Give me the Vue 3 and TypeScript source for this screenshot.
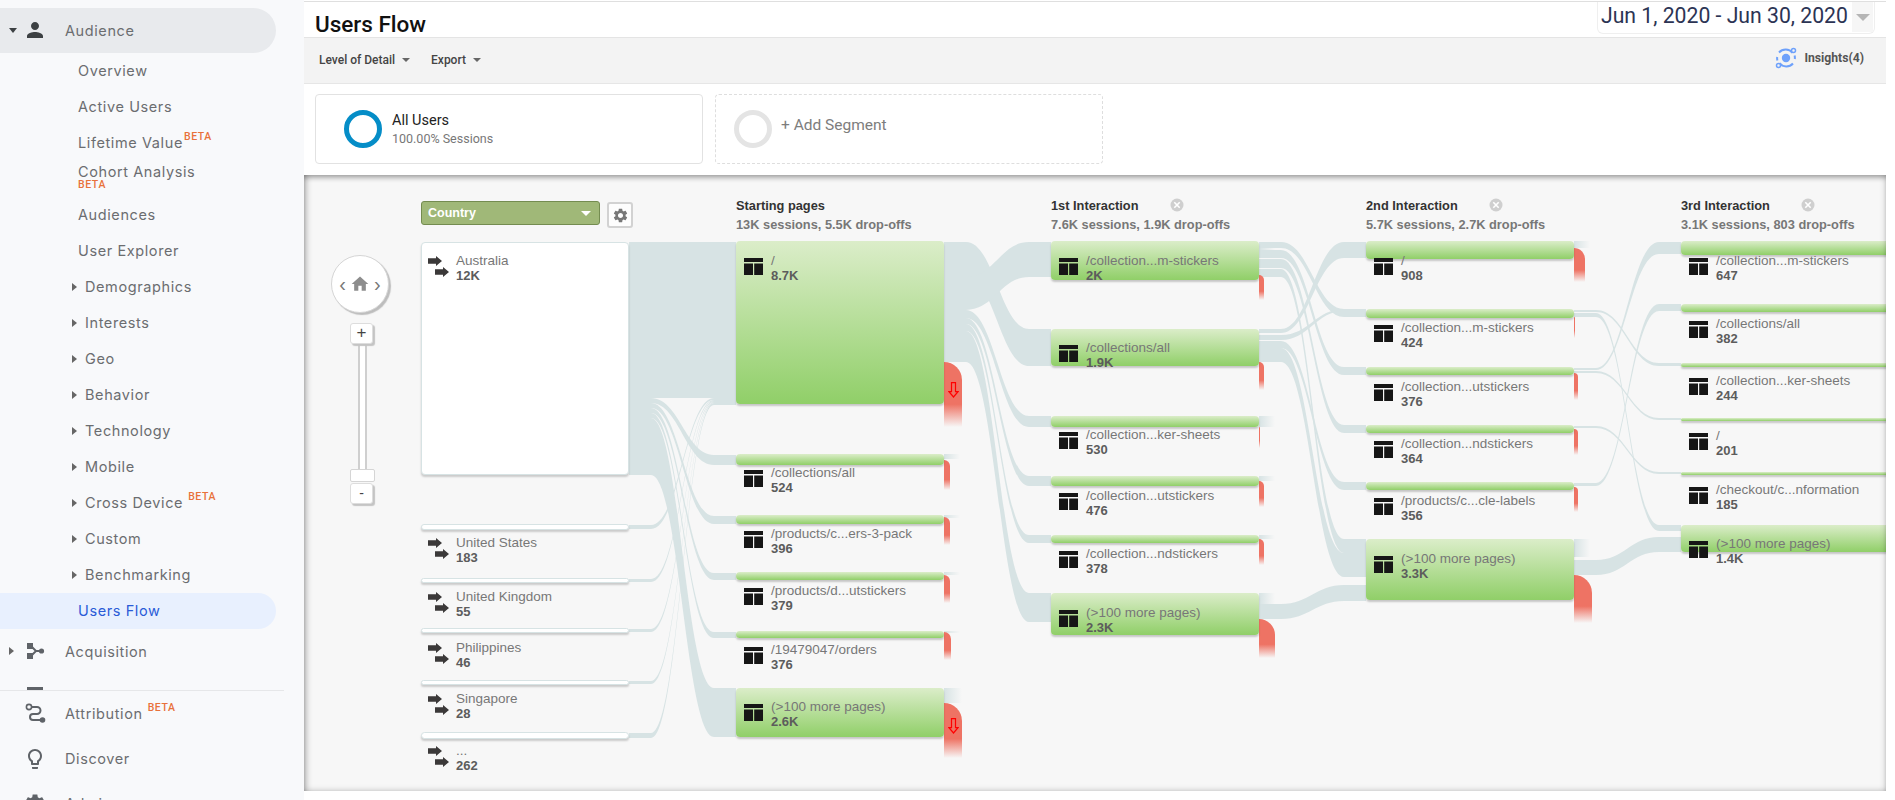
<script setup lang="ts">
type NavRow = { label: string; kind: 'top' | 'sub' | 'group'; beta?: boolean; active?: boolean; open?: boolean; icon?: string; stack?: boolean };

const navRows: NavRow[] = [
  { label: 'Audience', kind: 'top', open: true, icon: 'person' },
  { label: 'Overview', kind: 'sub' },
  { label: 'Active Users', kind: 'sub' },
  { label: 'Lifetime Value', kind: 'sub', beta: true },
  { label: 'Cohort Analysis', kind: 'sub', beta: true, stack: true },
  { label: 'Audiences', kind: 'sub' },
  { label: 'User Explorer', kind: 'sub' },
  { label: 'Demographics', kind: 'group' },
  { label: 'Interests', kind: 'group' },
  { label: 'Geo', kind: 'group' },
  { label: 'Behavior', kind: 'group' },
  { label: 'Technology', kind: 'group' },
  { label: 'Mobile', kind: 'group' },
  { label: 'Cross Device', kind: 'group', beta: true },
  { label: 'Custom', kind: 'group' },
  { label: 'Benchmarking', kind: 'group' },
  { label: 'Users Flow', kind: 'sub', active: true },
  { label: 'Acquisition', kind: 'top', icon: 'acq' },
  { label: '', kind: 'top', icon: 'beh' }
];
const bottomRows: NavRow[] = [
  { label: 'Attribution', kind: 'top', beta: true, icon: 'attr' },
  { label: 'Discover', kind: 'top', icon: 'bulb' },
  { label: 'Admin', kind: 'top', icon: 'gear' }
];

const OX = 304;
const OY = 175;
const px = (x: number, y: number) => ({ left: `${x - OX}px`, top: `${y - OY}px` });

const countries = [
  { name: 'Australia', val: '12K', y: 260 },
  { name: 'United States', val: '183', y: 542 },
  { name: 'United Kingdom', val: '55', y: 596 },
  { name: 'Philippines', val: '46', y: 647 },
  { name: 'Singapore', val: '28', y: 698 },
  { name: '...', val: '262', y: 750 }
];
const countryBars = [
  [242, 475], [524, 530], [578, 583], [628, 633], [680, 685], [732, 739]
];

const headers = [
  { x: 736, title: 'Starting pages', sub: '13K sessions, 5.5K drop-offs', close: 0 },
  { x: 1051, title: '1st Interaction', sub: '7.6K sessions, 1.9K drop-offs', close: 1177 },
  { x: 1366, title: '2nd Interaction', sub: '5.7K sessions, 2.7K drop-offs', close: 1496 },
  { x: 1681, title: '3rd Interaction', sub: '3.1K sessions, 803 drop-offs', close: 1808 }
];

const nodes = [
  { x: 736, t: 241, b: 404, name: '/', val: '8.7K', y: 260 },
  { x: 736, t: 454, b: 465, name: '/collections/all', val: '524', y: 472 },
  { x: 736, t: 515, b: 524, name: '/products/c...ers-3-pack', val: '396', y: 533 },
  { x: 736, t: 572, b: 580, name: '/products/d...utstickers', val: '379', y: 590 },
  { x: 736, t: 631, b: 638, name: '/19479047/orders', val: '376', y: 649 },
  { x: 736, t: 688, b: 737, name: '(>100 more pages)', val: '2.6K', y: 706 },
  { x: 1051, t: 241, b: 280, name: '/collection...m-stickers', val: '2K', y: 260 },
  { x: 1051, t: 329, b: 366, name: '/collections/all', val: '1.9K', y: 347 },
  { x: 1051, t: 416, b: 427, name: '/collection...ker-sheets', val: '530', y: 434 },
  { x: 1051, t: 476, b: 486, name: '/collection...utstickers', val: '476', y: 495 },
  { x: 1051, t: 535, b: 543, name: '/collection...ndstickers', val: '378', y: 553 },
  { x: 1051, t: 593, b: 635, name: '(>100 more pages)', val: '2.3K', y: 612 },
  { x: 1366, t: 241, b: 259, name: '/', val: '908', y: 260 },
  { x: 1366, t: 309, b: 318, name: '/collection...m-stickers', val: '424', y: 327 },
  { x: 1366, t: 367, b: 375, name: '/collection...utstickers', val: '376', y: 386 },
  { x: 1366, t: 425, b: 433, name: '/collection...ndstickers', val: '364', y: 443 },
  { x: 1366, t: 482, b: 490, name: '/products/c...cle-labels', val: '356', y: 500 },
  { x: 1366, t: 539, b: 600, name: '(>100 more pages)', val: '3.3K', y: 558 },
  { x: 1681, t: 241, b: 255, name: '/collection...m-stickers', val: '647', y: 260 },
  { x: 1681, t: 304, b: 312, name: '/collections/all', val: '382', y: 323 },
  { x: 1681, t: 363, b: 367, name: '/collection...ker-sheets', val: '244', y: 380 },
  { x: 1681, t: 418, b: 421, name: '/', val: '201', y: 435 },
  { x: 1681, t: 472, b: 475, name: '/checkout/c...nformation', val: '185', y: 489 },
  { x: 1681, t: 525, b: 552, name: '(>100 more pages)', val: '1.4K', y: 543 }
];

const drops = [
  { x: 944, t: 362, b: 427, w: 18, arrow: 390 },
  { x: 944, t: 460, b: 490, w: 6 },
  { x: 944, t: 517, b: 545, w: 6 },
  { x: 944, t: 575, b: 603, w: 6 },
  { x: 944, t: 632, b: 660, w: 7 },
  { x: 944, t: 703, b: 758, w: 18, arrow: 726 },
  { x: 1259, t: 275, b: 300, w: 5 },
  { x: 1259, t: 362, b: 390, w: 5 },
  { x: 1259, t: 427, b: 448, w: 1 },
  { x: 1259, t: 481, b: 507, w: 5 },
  { x: 1259, t: 539, b: 565, w: 5 },
  { x: 1259, t: 619, b: 658, w: 16 },
  { x: 1574, t: 248, b: 282, w: 11 },
  { x: 1574, t: 317, b: 338, w: 1 },
  { x: 1574, t: 373, b: 400, w: 4 },
  { x: 1574, t: 429, b: 455, w: 4 },
  { x: 1574, t: 487, b: 512, w: 4 },
  { x: 1574, t: 575, b: 623, w: 18 }
];

const links: number[][] = [
  [629, 242, 398, 736, 242, 398],
  [629, 398, 403, 736, 455, 465],
  [629, 403, 408, 736, 516, 524],
  [629, 408, 413, 736, 573, 580],
  [629, 413, 418, 736, 632, 638],
  [629, 418, 475, 736, 688, 737],
  [629, 525, 529, 736, 398, 400],
  [629, 579, 582, 736, 400, 401],
  [629, 629, 632, 736, 401, 402],
  [629, 681, 684, 736, 402, 403],
  [629, 733, 738, 736, 403, 405],
  [944, 242, 277, 1051, 329, 366],
  [944, 277, 310, 1051, 242, 277],
  [944, 310, 318, 1051, 416, 427],
  [944, 318, 324, 1051, 476, 486],
  [944, 324, 331, 1051, 535, 543],
  [944, 331, 362, 1051, 593, 622],
  [1259, 242, 248, 1366, 309, 317],
  [1259, 250, 258, 1366, 367, 375],
  [1259, 259, 268, 1366, 425, 433],
  [1259, 269, 277, 1366, 539, 553],
  [1259, 329, 333, 1366, 242, 258],
  [1259, 335, 340, 1366, 309, 311],
  [1259, 341, 348, 1366, 482, 490],
  [1259, 348, 362, 1366, 553, 577],
  [1259, 604, 619, 1366, 585, 601],
  [1574, 310, 312, 1681, 363, 366],
  [1574, 313, 317, 1681, 525, 531],
  [1574, 368, 370, 1681, 242, 254],
  [1574, 371, 373, 1681, 418, 420],
  [1574, 426, 428, 1681, 472, 474],
  [1574, 483, 486, 1681, 304, 311],
  [1574, 560, 575, 1681, 537, 552]
];

const stub = (x0: number, x1: number) => Math.min(22, (x1 - x0) * 0.22);
const bandPath = (l: number[]) => {
  const [x0, a0, b0, x1, a1, b1] = l;
  const s = stub(x0, x1);
  const sx = x0 + s;
  const ex = x1 - s;
  const m = (ex - sx) * 0.45;
  return `M${x0} ${a0}H${sx}C${sx + m} ${a0} ${ex - m} ${a1} ${ex} ${a1}H${x1}V${b1}H${ex}C${ex - m} ${b1} ${sx + m} ${b0} ${sx} ${b0}H${x0}Z`;
};

const fades = [
  { x: 944, y: 454, h: 5, w: 16 },
  { x: 944, y: 515, h: 3, w: 16 },
  { x: 944, y: 572, h: 3, w: 16 },
  { x: 944, y: 631, h: 2, w: 16 },
  { x: 944, y: 688, h: 15, w: 18 },
  { x: 1259, y: 416, h: 11, w: 16 },
  { x: 1259, y: 476, h: 5, w: 16 },
  { x: 1259, y: 535, h: 4, w: 16 },
  { x: 1259, y: 593, h: 11, w: 16 },
  { x: 1574, y: 241, h: 7, w: 16 },
  { x: 1574, y: 539, h: 18, w: 16 },
  { x: 1259, y: 242, h: 8, w: 16 }
];
</script>

<template>
  <div class="app">
    <aside class="sidebar">
      <div class="nav-scroll">
        <div
          v-for="row in navRows"
          :key="row.label + row.kind"
          class="nav-row"
          :class="[row.kind, { active: row.active, open: row.open, stack: row.stack }]"
        >
          <span v-if="row.kind === 'top'" class="caret-slot">
            <i v-if="row.open" class="caret-down"></i>
            <i v-else class="caret-right"></i>
          </span>
          <i v-if="row.kind === 'group'" class="caret-right group-caret"></i>
          <svg v-if="row.icon" class="nav-icon" viewBox="0 0 24 24">
            <path v-if="row.icon === 'person'" fill="#3c4043" d="M12 12c2.21 0 4-1.79 4-4s-1.790-4-4-4-4 1.790-4 4 1.790 4 4 4zm0 2c-2.670 0-8 1.340-8 4v2h16v-2c0-2.660-5.330-4-8-4z" />
            <g v-else-if="row.icon === 'acq'" fill="#5f6368">
              <rect x="4" y="4" width="6" height="6" />
              <rect x="4" y="14" width="6" height="6" />
              <circle cx="18.5" cy="12" r="2.6" />
              <path d="M8 7l5 5-5 5M13 12h5" fill="none" stroke="#5f6368" stroke-width="2" />
            </g>
            <rect v-else-if="row.icon === 'beh'" x="4" y="3" width="16" height="18" fill="#5f6368" />
          </svg>
          <span class="nav-text">{{ row.label }}</span><span v-if="row.beta" class="beta">BETA</span>
        </div>
      </div>
      <div class="nav-bottom">
        <div v-for="row in bottomRows" :key="row.label" class="nav-row top">
          <span class="caret-slot"></span>
          <svg class="nav-icon" viewBox="0 0 24 24">
            <g v-if="row.icon === 'attr'">
              <path d="M6 5H14a3.500 3.500 0 0 1 0 7H10a3 3 0 0 0 0 6H19" fill="none" stroke="#5f6368" stroke-width="2" />
              <circle cx="6" cy="5" r="2.6" fill="#f8f9fb" stroke="#5f6368" stroke-width="1.6" />
              <circle cx="19.5" cy="18" r="2.8" fill="#5f6368" />
            </g>
            <path v-else-if="row.icon === 'bulb'" fill="#5f6368" d="M9 21c0 .55.45 1 1 1h4c.55 0 1-.45 1-1v-1H9v1zm3-19C8.140 2 5 5.140 5 9c0 2.380 1.190 4.470 3 5.740V17c0 .55.45 1 1 1h6c.55 0 1-.45 1-1v-2.260c1.810-1.270 3-3.360 3-5.740 0-3.860-3.140-7-7-7zm2.850 11.100l-.85.6V16h-4v-2.300l-.85-.6C7.800 12.160 7 10.630 7 9c0-2.760 2.240-5 5-5s5 2.240 5 5c0 1.630-.8 3.160-2.150 4.100z" />
            <path v-else fill="#5f6368" d="M19.14 12.94c.04-.3.06-.61.06-.94 0-.32-.02-.64-.07-.94l2.03-1.58c.18-.14.23-.41.12-.61l-1.92-3.32c-.12-.22-.37-.29-.59-.22l-2.39.96c-.5-.38-1.03-.7-1.62-.94l-.36-2.54c-.04-.24-.24-.41-.48-.41h-3.84c-.24 0-.43.17-.47.41l-.36 2.54c-.59.24-1.13.57-1.62.94l-2.39-.96c-.22-.08-.47 0-.59.22L2.74 8.87c-.12.21-.08.47.12.61l2.03 1.58c-.05.3-.09.63-.09.94s.02.64.07.94l-2.03 1.58c-.18.14-.23.41-.12.61l1.92 3.32c.12.22.37.29.59.22l2.39-.96c.5.38 1.03.7 1.62.94l.36 2.54c.05.24.24.41.48.41h3.84c.24 0 .44-.17.47-.41l.36-2.54c.59-.24 1.13-.56 1.62-.94l2.39.96c.22.08.47 0 .59-.22l1.92-3.32c.12-.22.07-.47-.12-.61l-2.01-1.58zM12 15.6c-1.98 0-3.6-1.62-3.6-3.6s1.62-3.6 3.6-3.6 3.6 1.62 3.6 3.6-1.62 3.6-3.6 3.6z" />
          </svg>
          <span class="nav-text">{{ row.label }}</span><span v-if="row.beta" class="beta">BETA</span>
        </div>
      </div>
    </aside>

    <main class="main">
      <header class="titlebar">
        <h1 class="title">Users Flow</h1>
        <div class="date-box">
          <span class="date-text">Jun 1, 2020 - Jun 30, 2020</span>
          <span class="date-caret"><i></i></span>
        </div>
      </header>

      <div class="toolbar">
        <button class="tool-btn">Level of Detail <i class="tool-caret"></i></button>
        <button class="tool-btn">Export <i class="tool-caret"></i></button>
        <div class="insights">
          <svg width="24" height="24" viewBox="0 0 24 24" fill="none">
            <circle cx="12" cy="12" r="4.2" fill="#6ea1fb" />
            <path d="M18.6 6.8A9 9 0 0 0 5 6.500M5.400 17.200A9 9 0 0 0 19 17.500M3.200 11a9 9 0 0 0 .2 3.500M20.800 13a9 9 0 0 0-.2-3.500" stroke="#6ea1fb" stroke-width="2" />
            <circle cx="19.5" cy="4.5" r="2" stroke="#6ea1fb" stroke-width="1.5" fill="#f3f3f3" />
            <circle cx="4.5" cy="19.5" r="2" stroke="#6ea1fb" stroke-width="1.5" fill="#f3f3f3" />
          </svg>
          <span>Insights(4)</span>
        </div>
      </div>

      <section class="segments">
        <div class="segment">
          <i class="ring ring-blue"></i>
          <div>
            <div class="seg-name">All Users</div>
            <div class="seg-sub">100.00% Sessions</div>
          </div>
        </div>
        <div class="segment add">
          <i class="ring ring-gray"></i>
          <div class="seg-add">+ Add Segment</div>
        </div>
      </section>

      <section class="canvas">
        <svg class="links" viewBox="304 175 1582 616" width="1582" height="616">
          <defs>
            <linearGradient id="fadeRight">
              <stop offset="0" stop-color="#d7e3e4" />
              <stop offset="1" stop-color="#d7e3e4" stop-opacity="0" />
            </linearGradient>
          </defs>
          <path v-for="(l, i) in links" :key="i" :d="bandPath(l)" fill="#d7e3e4" />
          <rect v-for="(f, i) in fades" :key="'f' + i" :x="f.x" :y="f.y" :width="f.w" :height="f.h" fill="url(#fadeRight)" />
        </svg>

        <div class="home" :style="px(331, 255)">
          <span class="chev">‹</span>
          <svg width="20" height="20" viewBox="0 0 24 24"><path fill="#8d8d8d" d="M10 20v-6h4v6h5v-8h3L12 3 2 12h3v8z" /></svg>
          <span class="chev">›</span>
        </div>
        <div class="zoom-track" :style="px(358, 344)"></div>
        <div class="zoom-btn" :style="px(350, 323)">+</div>
        <div class="zoom-handle" :style="px(350, 469)"></div>
        <div class="zoom-btn minus" :style="px(350, 483)">-</div>

        <div class="select" :style="px(421, 201)">
          <span>Country</span>
          <i></i>
        </div>
        <div class="gear-btn" :style="px(607, 202)">
          <svg width="17" height="17" viewBox="0 0 24 24"><path fill="#777" d="M19.14 12.94c.04-.3.06-.61.06-.94 0-.32-.02-.64-.07-.94l2.03-1.58c.18-.14.23-.41.12-.61l-1.92-3.32c-.12-.22-.37-.29-.59-.22l-2.39.96c-.5-.38-1.03-.7-1.62-.94l-.36-2.54c-.04-.24-.24-.41-.48-.41h-3.84c-.24 0-.43.17-.47.41l-.36 2.54c-.59.24-1.13.57-1.62.94l-2.39-.96c-.22-.08-.47 0-.59.22L2.74 8.87c-.12.21-.08.47.12.61l2.03 1.58c-.05.3-.09.63-.09.94s.02.64.07.94l-2.03 1.58c-.18.14-.23.41-.12.61l1.92 3.32c.12.22.37.29.59.22l2.39-.96c.5.38 1.03.7 1.62.94l.36 2.54c.05.24.24.41.48.41h3.84c.24 0 .44-.17.47-.41l.36-2.54c.59-.24 1.13-.56 1.62-.94l2.39.96c.22.08.47 0 .59-.22l1.92-3.32c.12-.22.07-.47-.12-.61l-2.01-1.58zM12 15.6c-1.98 0-3.6-1.62-3.6-3.6s1.62-3.6 3.6-3.6 3.6 1.62 3.6 3.6-1.62 3.6-3.6 3.6z" /></svg>
        </div>

        <div
          v-for="(b, i) in countryBars"
          :key="'cb' + i"
          class="country-bar"
          :style="{ ...px(421, b[0]), height: `${b[1] - b[0]}px` }"
        ></div>
        <div v-for="c in countries" :key="c.name" class="label" :style="px(428, c.y - 7)">
          <svg class="arrows" width="21" height="21" viewBox="0 0 21 21">
            <path fill="#3b3939" d="M0 2.200h8V0l6 5-6 5V7.800H0zM7 13.200h8V11l6 5-6 5v-2.200H7z" />
          </svg>
          <div class="label-text">
            <div class="name">{{ c.name }}</div>
            <div class="val">{{ c.val }}</div>
          </div>
        </div>

        <div v-for="h in headers" :key="h.title" class="col-head" :style="px(h.x, 196)">
          <div class="col-title">{{ h.title }}</div>
          <div class="col-sub">{{ h.sub }}</div>
        </div>
        <svg v-for="h in headers.filter(v => v.close)" :key="'x' + h.x" class="close" width="14" height="14" viewBox="0 0 14 14" :style="px(h.close - 7, 198)">
          <circle cx="7" cy="7" r="6.5" fill="#cfcfcf" />
          <path d="M4.3 4.3l5.4 5.4M9.7 4.3l-5.4 5.4" stroke="#fff" stroke-width="1.6" />
        </svg>

        <div
          v-for="(d, i) in drops"
          :key="'d' + i"
          class="drop"
          :style="{ ...px(d.x, d.t), width: `${d.w}px`, height: `${d.b - d.t}px`, borderTopRightRadius: `${d.w}px` }"
        ></div>
        <svg v-for="d in drops.filter(v => v.arrow)" :key="'a' + d.t" class="red-arrow" width="11" height="16" viewBox="0 0 11 16" :style="px(d.x + 4, (d.arrow as number) - 8)">
          <path d="M3.5 .7h4v9h2.5L5.5 15 1 9.7h2.500z" fill="none" stroke="#f00" stroke-width="1.2" />
        </svg>

        <div
          v-for="n in nodes"
          :key="'n' + n.x + n.t"
          class="node"
          :style="{ ...px(n.x, n.t), height: `${n.b - n.t}px` }"
        ></div>
        <div v-for="n in nodes" :key="'l' + n.x + n.t" class="label page-label" :style="px(n.x + 8, n.y - 7)">
          <svg class="page-icon" width="19" height="17" viewBox="0 0 19 17">
            <path fill="#161616" d="M0 0h19v4H0zM0 5.500h9V17H0zM10.200 5.500H19V17h-8.800z" />
          </svg>
          <div class="label-text">
            <div class="name">{{ n.name }}</div>
            <div class="val">{{ n.val }}</div>
          </div>
        </div>
      </section>
    </main>
  </div>
</template>

<style scoped>
.app {
  display: flex;
  width: 1895px;
  height: 800px;
  overflow: hidden;
  background: #fff;
}
.sidebar {
  width: 304px;
  flex: none;
  height: 800px;
  background: #f8f9fb;
  font-family: Inter, Roboto, sans-serif;
  font-size: 14.500px;
  letter-spacing: 0.6px;
  color: #6b6d70;
  overflow: hidden;
}
.nav-scroll {
  height: 690px;
  padding-top: 8px;
  box-sizing: border-box;
  overflow: hidden;
}
.nav-bottom {
  border-top: 1px solid #e6e7e9;
  margin-right: 20px;
}
.nav-bottom .nav-row {
  margin-right: -20px;
}
.nav-row {
  display: flex;
  align-items: center;
  width: 276px;
  white-space: nowrap;
  box-sizing: border-box;
}
.nav-row.top {
  height: 45px;
}
.nav-row.top.open {
  height: 44.500px;
  background: #e8eaed;
  border-radius: 0 23px 23px 0;
}
.nav-row.sub {
  height: 36px;
  padding-left: 78px;
}
.nav-row.group {
  height: 36px;
  padding-left: 72px;
}
.nav-row.active {
  background: #e8f0fe;
  color: #2a5bd7;
  border-radius: 0 18px 18px 0;
}
.nav-row.stack {
  display: block;
  line-height: 18px;
  padding-top: 2px;
}
.nav-row.stack .beta {
  display: block;
  top: 0;
  margin: -1px 0 0;
  line-height: 10px;
}
.caret-slot {
  width: 23px;
  flex: none;
  padding-left: 9px;
  box-sizing: border-box;
  display: flex;
}
.caret-down {
  border: 4.500px solid transparent;
  border-top: 5px solid #3c4043;
  border-bottom: 0;
}
.caret-right {
  border: 4.500px solid transparent;
  border-left: 5px solid #666;
  border-right: 0;
}
.group-caret {
  margin-right: 8px;
}
.nav-icon {
  width: 24px;
  height: 24px;
  flex: none;
  margin-right: 18px;
}
.beta {
  color: #e8713a;
  font-family: Roboto, sans-serif;
  font-size: 10.500px;
  font-weight: 500;
  position: relative;
  top: -6px;
  margin-left: 1px;
}
.group .beta,
.nav-bottom .beta {
  margin-left: 5px;
}
.main {
  flex: none;
  width: 1582px;
  height: 791px;
  display: flex;
  flex-direction: column;
  font-family: Roboto, sans-serif;
}
.titlebar {
  height: 35px;
  border-top: 1px solid #dfdfdf;
  margin-top: 1px;
  border-bottom: 1px solid #e4e4e4;
  display: flex;
  align-items: flex-start;
  justify-content: space-between;
}
.title {
  margin: 9px 0 0 11px;
  font-size: 22.500px;
  line-height: 26px;
  font-weight: 500;
  color: #111;
}
.date-box {
  width: 278px;
  height: 32px;
  margin-right: 11px;
  box-sizing: border-box;
  border: 1px solid #efefef;
  border-top: 0;
  border-radius: 0 0 6px 6px;
  padding: 0 0 0 3px;
  display: flex;
  align-items: flex-start;
  justify-content: space-between;
  background: #fff;
}
.date-text {
  font-size: 21.200px;
  line-height: 28px;
  color: #2c3454;
  white-space: nowrap;
}
.date-caret {
  width: 21px;
  height: 30px;
  background: #f6f6f6;
  margin-right: 1px;
  display: flex;
  align-items: center;
  justify-content: center;
  flex: none;
}
.date-caret i {
  border: 7px solid transparent;
  border-top: 7px solid #b5b5b5;
  border-bottom: 0;
}
.toolbar {
  height: 45px;
  flex: none;
  background: #f3f3f3;
  border-bottom: 1px solid #e6e6e6;
  display: flex;
  align-items: center;
  padding-left: 15px;
  gap: 21px;
}
.tool-btn {
  border: 0;
  background: none;
  padding: 0 0 2px;
  font: 500 12px Roboto, sans-serif;
  color: #444;
  display: flex;
  align-items: center;
  gap: 7px;
}
.tool-caret {
  border: 4px solid transparent;
  border-top: 4px solid #666;
  border-bottom: 0;
}
.insights {
  margin-left: auto;
  margin-right: 22px;
  margin-bottom: 5px;
  display: flex;
  align-items: center;
  gap: 6px;
  font-size: 12.200px;
  font-weight: 700;
  color: #555;
}
.segments {
  height: 91px;
  flex: none;
  display: flex;
  gap: 12px;
  padding: 10px 0 0 11px;
  box-sizing: border-box;
}
.segment {
  width: 388px;
  height: 70px;
  box-sizing: border-box;
  border: 1px solid #e2e2e2;
  border-radius: 4px;
  display: flex;
  align-items: center;
  padding-left: 28px;
  gap: 10px;
}
.segment.add {
  border: 1px dashed #dedede;
  padding-left: 18px;
  gap: 9px;
}
.ring {
  width: 38px;
  height: 38px;
  box-sizing: border-box;
  border-radius: 50%;
  flex: none;
  border: 5px solid #058dc7;
}
.ring-gray {
  border-color: #e4e4e4;
}
.seg-name {
  font-size: 14.500px;
  color: #222;
  line-height: 20px;
}
.seg-sub {
  font-size: 12.500px;
  color: #777;
  line-height: 16px;
}
.seg-add {
  font-size: 15.500px;
  color: #7d7d7d;
  margin-top: -8px;
}
.canvas {
  position: relative;
  flex: 1;
  background: #f7f7f7;
  overflow: hidden;
  font-family: "Liberation Sans", Arial, sans-serif;
}
.canvas::after {
  content: "";
  position: absolute;
  inset: 0;
  pointer-events: none;
  box-shadow: inset 0 5px 5px -2px rgba(0, 0, 0, 0.3), inset 5px 0 6px -3px rgba(0, 0, 0, 0.3), inset 0 -5px 6px -4px rgba(0, 0, 0, 0.12), inset -5px 0 6px -4px rgba(0, 0, 0, 0.15);
}
.links {
  position: absolute;
  left: 0;
  top: 0;
}
.home {
  position: absolute;
  width: 58px;
  height: 58px;
  border-radius: 50%;
  background: #fff;
  box-sizing: border-box;
  border: 1px solid #d5d5d5;
  box-shadow: 2px 2px 1px #bdbdbd;
  display: flex;
  align-items: center;
  justify-content: center;
  gap: 4px;
}
.chev {
  font-size: 20px;
  color: #777;
  line-height: 1;
}
.zoom-track {
  position: absolute;
  width: 9px;
  height: 126px;
  background: #fff;
  border: 1px solid #cfcfcf;
  border-width: 0 2px;
  box-sizing: border-box;
}
.zoom-btn {
  position: absolute;
  width: 23px;
  height: 21px;
  box-sizing: border-box;
  background: #fff;
  border: 1px solid #ddd;
  border-radius: 3px;
  box-shadow: 2px 2px 1px #c4c4c4;
  text-align: center;
  font-size: 17px;
  line-height: 18px;
  color: #444;
}
.zoom-btn.minus {
  font-size: 14px;
}
.zoom-handle {
  position: absolute;
  width: 25px;
  height: 13px;
  box-sizing: border-box;
  background: #fff;
  border: 1px solid #d5d5d5;
  border-radius: 2px;
}
.select {
  position: absolute;
  width: 179px;
  height: 24px;
  box-sizing: border-box;
  background: #a0b878;
  border: 1px solid #748c50;
  border-radius: 3px;
  display: flex;
  align-items: center;
  justify-content: space-between;
  padding: 0 8px 0 6px;
  color: #fff;
  font-weight: 700;
  font-size: 12.500px;
}
.select i {
  border: 5px solid transparent;
  border-top: 5px solid #fff;
  border-bottom: 0;
}
.gear-btn {
  position: absolute;
  width: 26px;
  height: 26px;
  box-sizing: border-box;
  background: #fdfdfd;
  border: 2px solid #d2d2d2;
  border-radius: 3px;
  display: flex;
  align-items: center;
  justify-content: center;
}
.country-bar {
  position: absolute;
  width: 208px;
  box-sizing: border-box;
  background: #fff;
  border: 1px solid #d7e3e4;
  border-radius: 4px;
  box-shadow: 0 2px 2px rgba(0, 0, 0, 0.18);
}
.label {
  position: absolute;
  display: flex;
  white-space: nowrap;
}
.arrows {
  margin: 3px 7px 0 0;
  flex: none;
}
.page-icon {
  margin: 5px 8px 0 0;
  flex: none;
}
.label-text {
  line-height: 15px;
}
.name {
  font-size: 13.500px;
  color: #777;
}
.val {
  font-size: 13px;
  font-weight: 700;
  color: #5c5c5c;
}
.col-head {
  position: absolute;
  white-space: nowrap;
  font-size: 12.800px;
  font-weight: 700;
  line-height: 19px;
}
.col-title {
  color: #333;
}
.col-sub {
  color: #777;
}
.close,
.red-arrow {
  position: absolute;
}
.drop {
  position: absolute;
  background: linear-gradient(#ee7364 0, #ee7364 65%, rgba(238, 115, 100, 0) 100%);
}
.node {
  position: absolute;
  width: 208px;
  border-radius: 4px;
  background: linear-gradient(#dbedc9, #90cf68);
  box-shadow: 0 2px 2px rgba(0, 0, 0, 0.2);
}
</style>

<style>
html, body { margin: 0; background: #fff; }
</style>
